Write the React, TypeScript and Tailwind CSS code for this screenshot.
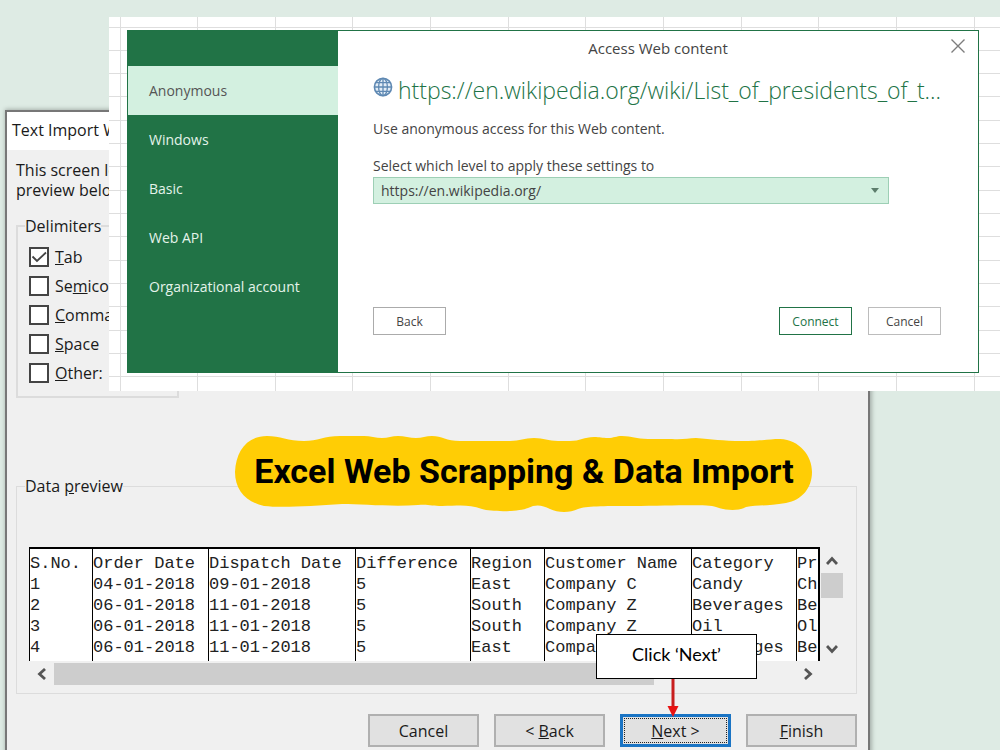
import { ReactNode } from 'react';

const accounts = ['Anonymous', 'Windows', 'Basic', 'Web API', 'Organizational account'];

const columns = [
  { title: 'S.No.', width: 'w-[63px]' },
  { title: 'Order Date', width: 'w-[116px]' },
  { title: 'Dispatch Date', width: 'w-[147px]' },
  { title: 'Difference', width: 'w-[115px]' },
  { title: 'Region', width: 'w-[74px]' },
  { title: 'Customer Name', width: 'w-[147px]' },
  { title: 'Category', width: 'w-[105px]' },
  { title: 'Pr', width: 'w-auto' },
];

const rows = [
  ['1', '04-01-2018', '09-01-2018', '5', 'East', 'Company C', 'Candy', 'Ch'],
  ['2', '06-01-2018', '11-01-2018', '5', 'South', 'Company Z', 'Beverages', 'Be'],
  ['3', '06-01-2018', '11-01-2018', '5', 'South', 'Company Z', 'Oil', 'Ol'],
  ['4', '06-01-2018', '11-01-2018', '5', 'East', 'Company Z', 'Beverages', 'Be'],
];

function SheetGrid() {
  return (
    <svg className="absolute inset-0 h-full w-full" shapeRendering="crispEdges" stroke="#dedede" aria-hidden="true">
      {Array.from({ length: 40 }, (_, i) => {
        const x = Math.floor(11 + i * 77.65) + 0.5;
        return <line key={`c${i}`} x1={x} x2={x} y1="0" y2="100%" />;
      })}
      {Array.from({ length: 16 }, (_, i) => {
        const y = Math.floor(10 + i * 23.33) + 0.5;
        return <line key={`r${i}`} x1="0" x2="100%" y1={y} y2={y} />;
      })}
    </svg>
  );
}

function Globe() {
  return (
    <svg viewBox="0 0 20 20" className="h-5 w-5 shrink-0" fill="none" stroke="#5f89b3" strokeWidth="1.3" aria-hidden="true">
      <circle cx="10" cy="10" r="8.6" fill="#e3edf6" strokeWidth="1.6" />
      <ellipse cx="10" cy="10" rx="4.4" ry="8.6" />
      <path d="M10 1.4v17.2M1.4 10h17.2M2.8 5.6h14.4M2.8 14.4h14.4" />
    </svg>
  );
}

function Chevron({ d }: { d: string }) {
  return (
    <svg viewBox="0 0 12 12" className="h-3 w-3" fill="none" stroke="#555" strokeWidth="2.8" aria-hidden="true">
      <path d={d} />
    </svg>
  );
}

function AccessDialog() {
  return (
    <section className="relative mt-[13px] mr-[21px] mb-[18px] ml-[18px] flex border border-[#217346] bg-white text-sm text-[#444]">
      <nav className="flex w-[210px] shrink-0 flex-col bg-[#217346] pt-[35px] pb-[61px]">
        {accounts.map((name, i) => (
          <button
            key={name}
            className={
              i === 0
                ? 'h-[49px] bg-[#d3f0e0] pl-[21px] text-left text-[#555]'
                : 'h-[49px] pl-[21px] text-left text-[#e4f3ea]'
            }
          >
            {name}
          </button>
        ))}
      </nav>

      <div className="flex min-w-0 flex-1 flex-col">
        <header className="relative flex h-9 items-center justify-center">
          <h2 className="text-[15px]">Access Web content</h2>
          <button aria-label="Close" className="absolute top-[7px] right-3">
            <svg viewBox="0 0 16 16" className="h-4 w-4" stroke="#7d7d7d" strokeWidth="1.4">
              <path d="M1.5 1.5l13 13M14.5 1.5l-13 13" />
            </svg>
          </button>
        </header>

        <div className="flex flex-1 flex-col pr-[37px] pb-[37px] pl-[35px]">
          <div className="flex h-12 gap-[5px] pt-[10px]">
            <Globe />
            <h1 className="-mt-[3px] text-[23px] leading-8 font-light whitespace-nowrap text-[#217346]">
              https://en.wikipedia.org/wiki/List_of_presidents_of_t...
            </h1>
          </div>
          <p className="mt-1 leading-5">Use anonymous access for this Web content.</p>
          <label htmlFor="level" className="mt-[17px] leading-5">
            Select which level to apply these settings to
          </label>
          <div className="relative mt-px mr-[52px]">
            <select
              id="level"
              className="block h-[27px] w-full appearance-none border border-[#9dcfb5] bg-[#d3f0e0] pl-[7px]"
            >
              <option>https://en.wikipedia.org/</option>
            </select>
            <svg viewBox="0 0 8 5" className="pointer-events-none absolute top-[11px] right-[10px] h-[5px] w-2" fill="#5d7d6c">
              <path d="M0 0h8L4 5z" />
            </svg>
          </div>
          <div className="mt-auto flex gap-4 text-xs">
            <button className="mr-auto h-7 w-[73px] border border-[#ababab] pt-0.5">Back</button>
            <button className="h-7 w-[73px] border border-[#217346] pt-0.5 text-[#217346]">Connect</button>
            <button className="h-7 w-[73px] border border-[#bcbcbc] pt-0.5">Cancel</button>
          </div>
        </div>
      </div>
    </section>
  );
}

function Delimiter({ id, checked, children }: { id: string; checked?: boolean; children: ReactNode }) {
  return (
    <div className="flex h-5 items-center gap-[6px]">
      <span className="relative flex h-5 w-5">
        <input
          type="checkbox"
          id={id}
          defaultChecked={checked}
          className="peer h-5 w-5 appearance-none border-2 border-[#444] bg-white"
        />
        <svg
          viewBox="0 0 20 20"
          className="pointer-events-none absolute inset-0 hidden h-5 w-5 peer-checked:block"
          fill="none"
          stroke="#444"
          strokeWidth="1.8"
        >
          <path d="M3.5 9.500l4.500 4.500L17 5.500" />
        </svg>
      </span>
      <label htmlFor={id}>{children}</label>
    </div>
  );
}

function PreviewTable() {
  return (
    <div className="min-w-0 flex-1 overflow-hidden border-t-2 border-r-2 border-black bg-white">
      <table className="w-full table-fixed border-separate border-spacing-0 font-['Liberation_Mono',monospace] text-[17px] leading-[21px] text-[#222]">
        <thead>
          <tr>
            {columns.map((c) => (
              <th key={c.title} className={`${c.width} border-l border-black p-0 pt-1 text-left font-normal whitespace-nowrap`}>
                {c.title}
              </th>
            ))}
          </tr>
        </thead>
        <tbody>
          {rows.map((row) => (
            <tr key={row[0]} className="group">
              {row.map((cell, i) => (
                <td key={i} className="border-l border-black p-0 whitespace-nowrap group-last:pb-[3px]">
                  {cell}
                </td>
              ))}
            </tr>
          ))}
        </tbody>
      </table>
    </div>
  );
}

function ImportWizard() {
  return (
    <section className="absolute top-[110px] left-[5px] w-[865px] border-2 border-[#777] bg-[#f0f0f0] text-base text-[#1a1a1a] shadow-[1px_0_4px_1px_rgba(0,0,0,0.25)]">
      <h2 className="h-[38px] bg-white pl-[5px] leading-[36px]">Text Import Wizard</h2>

      <div className="flex flex-col pt-[10px] pr-[11px] pb-8 pl-[9px] font-medium">
        <p className="leading-5">
          This screen lets
          <br />
          preview below.
        </p>

        <fieldset className="mt-4 w-[163px] border-2 border-[#dcdcdc] pb-[13px] pl-[11px]">
          <legend className="-ml-1 leading-5">Delimiters</legend>
          <div className="mt-[11px] flex flex-col gap-[9px]">
            <Delimiter id="tab" checked><u>T</u>ab</Delimiter>
            <Delimiter id="semicolon">Se<u>m</u>icolon</Delimiter>
            <Delimiter id="comma"><u>C</u>omma</Delimiter>
            <Delimiter id="space"><u>S</u>pace</Delimiter>
            <Delimiter id="other"><u>O</u>ther:</Delimiter>
          </div>
        </fieldset>

        <fieldset className="mt-[78px] min-w-0 border border-[#dcdcdc] pr-3 pb-2 pl-3">
          <legend className="-ml-1 leading-5">Data <u>p</u>review</legend>
          <div className="mt-[51px] flex">
            <PreviewTable />
            <div className="flex w-6 flex-col items-center pt-2 pb-[6px]">
              <button aria-label="Scroll up"><Chevron d="M1 9l5-5.5L11 9" /></button>
              <div className="mt-[6px] mb-auto h-[25px] w-[22px] bg-[#cdcdcd]" />
              <button aria-label="Scroll down"><Chevron d="M1 3l5 5.5L11 3" /></button>
            </div>
          </div>
          <div className="mt-[2px] mr-6 flex h-[22px] items-center">
            <button aria-label="Scroll left" className="flex w-[25px] justify-center"><Chevron d="M9 1L3.500 6L9 11" /></button>
            <div className="h-[22px] w-[600px] bg-[#cdcdcd]" />
            <button aria-label="Scroll right" className="mr-[6px] ml-auto"><Chevron d="M3 1l5.500 5L3 11" /></button>
          </div>
        </fieldset>

        <div className="mt-5 flex justify-end gap-[15px]">
          <button className="h-[33px] w-[111px] border-2 border-[#b0b0b0] bg-[#e1e1e1]">Cancel</button>
          <button className="h-[33px] w-[111px] border-2 border-[#b0b0b0] bg-[#e1e1e1]">&lt; <u>B</u>ack</button>
          <button className="h-[33px] w-[111px] border-[3px] border-[#1a74c4] bg-[#e1e1e1] p-px">
            <span className="flex h-full items-center justify-center border border-dotted border-[#222]">
              <span><u>N</u>ext &gt;</span>
            </span>
          </button>
          <button className="h-[33px] w-[111px] border-2 border-[#b0b0b0] bg-[#e1e1e1]"><u>F</u>inish</button>
        </div>
      </div>
    </section>
  );
}

function Banner() {
  return (
    <div className="absolute top-[432px] left-[232px] flex h-[84px] w-[584px] items-center justify-center pb-[6px]">
      <svg viewBox="0 0 584 84" className="absolute inset-0 h-full w-full" aria-hidden="true">
        <path
          fill="#ffcd05"
          d="M3 40C4 20 14 4 35 4C48 4 56 9 72 9C86 9 92 4 108 4H132C138 4 144 6 150 6C156 6 160 4 166 4C172 4 178 6 184 6C190 6 194 4 200 4C210 4 214 9 228 9H278C288 9 292 6 302 6C312 6 316 9 326 9H338C348 9 352 5 362 5C368 5 370 6 376 6C382 6 384 4 390 4C400 4 404 7 416 7H440C450 8 456 6 464 6C480 7 490 9 510 9C530 9 536 7 548 7C568 8 580 24 580 40C580 56 570 68 554 71C536 74 526 73 514 75C508 79 494 79 484 75C474 72 440 74 400 74C370 74 354 74 346 77C338 81 326 81 318 77C310 73 304 72 296 76C286 80 260 80 250 77C236 72 226 74 210 74C200 74 196 72 186 73C160 75 130 72 110 72C80 74 50 76 32 74C14 70 3 58 3 40Z"
        />
      </svg>
      <strong className="relative font-['Roboto',sans-serif] text-[34px] leading-10 font-bold whitespace-nowrap text-black">
        Excel Web Scrapping &amp; Data Import
      </strong>
    </div>
  );
}

function Callout() {
  return (
    <div className="absolute top-[634px] left-[596px] flex w-[161px] flex-col items-center">
      <div className="flex h-[45px] w-full items-center justify-center border border-black bg-white pb-1.5 font-['Lato',sans-serif] text-lg text-black">
        Click ‘Next’
      </div>
      <svg viewBox="0 0 12 38" className="-ml-2 h-[38px] w-3" aria-hidden="true">
        <path d="M4.500 0h3v28h-3z" fill="#c81e1e" />
        <path d="M0.500 27h11L6 38z" fill="#e81212" />
      </svg>
    </div>
  );
}

export default function App() {
  return (
    <main className="relative h-screen overflow-hidden bg-[#deebe4] font-['Open_Sans',sans-serif]">
      <ImportWizard />
      <div className="absolute top-[17px] right-0 left-[109px] overflow-hidden bg-white">
        <SheetGrid />
        <AccessDialog />
      </div>
      <Banner />
      <Callout />
    </main>
  );
}
